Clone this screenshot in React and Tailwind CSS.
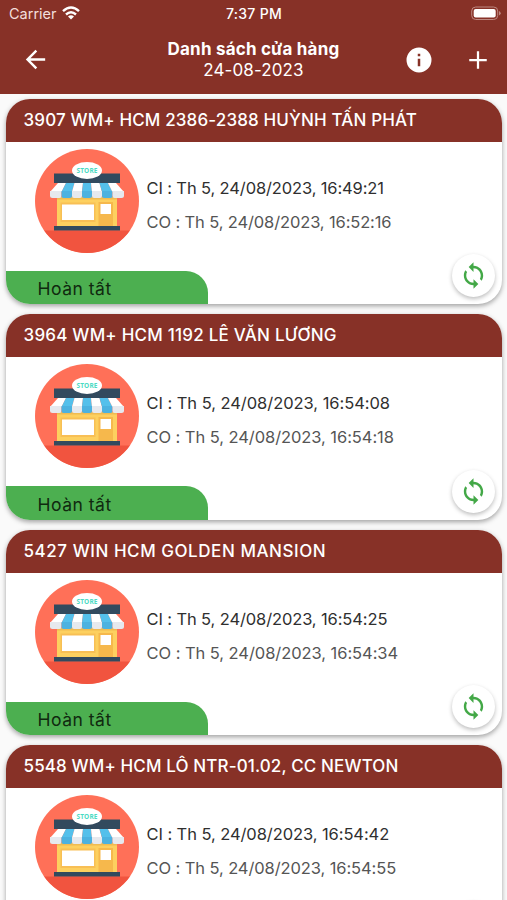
import React from "react";

const stores = [
  { name: "3907 WM+ HCM 2386-2388 HUỲNH TẤN PHÁT", ci: "16:49:21", co: "16:52:16", status: "Hoàn tất", nameFit: "tracking-[0.14px]", ciFit: "tracking-[-0.13px]", coFit: "tracking-[-0.13px]" },
  { name: "3964 WM+ HCM 1192 LÊ VĂN LƯƠNG", ci: "16:54:08", co: "16:54:18", status: "Hoàn tất", nameFit: "tracking-[0.22px]", ciFit: "tracking-[-0.05px]", coFit: "tracking-[-0.07px]" },
  { name: "5427 WIN HCM GOLDEN MANSION", ci: "16:54:25", co: "16:54:34", status: "Hoàn tất", nameFit: "tracking-[0.55px]", ciFit: "tracking-[-0.12px]", coFit: "tracking-[-0.06px]" },
  { name: "5548 WM+ HCM LÔ NTR-01.02, CC NEWTON", ci: "16:54:42", co: "16:54:55", status: null, nameFit: "tracking-[0.13px]", ciFit: "tracking-[-0.08px]", coFit: "tracking-[-0.1px]" },
];

function StoreArt() {
  return (
    <svg viewBox="0 0 104 104" className="h-[104px] w-[104px] shrink-0">
      <defs>
        <clipPath id="disc"><circle cx="52" cy="52" r="52" /></clipPath>
      </defs>
      <circle cx="52" cy="52" r="52" fill="#ff7058" />
      <rect y="81.500" width="104" height="23" fill="#f1543f" clipPath="url(#disc)" />
      <rect x="22" y="48" width="60" height="30" fill="#fdd05f" />
      <rect x="22" y="48" width="60" height="2.500" fill="#f0bb52" />
      <rect x="25.500" y="53.500" width="35" height="19.500" fill="#f8bf55" />
      <rect x="27" y="55.500" width="32" height="15.500" fill="#fff" />
      <rect x="63.500" y="53" width="14.500" height="25" fill="#f6b84c" />
      <rect x="65.500" y="55" width="10.500" height="10" fill="#fff" />
      <rect x="19" y="77" width="66" height="4.500" fill="#324a5e" />
      <rect x="19" y="24.500" width="66" height="9.500" fill="#324a5e" />
      <path d="M23 34h8l-4.500 9H15z" fill="#fff" />
      <path d="M31 34h8.500l-2.500 9H26.500z" fill="#54c0eb" />
      <path d="M39.500 34H48l-1 9H37z" fill="#fff" />
      <path d="M48 34h8l1 9H47z" fill="#54c0eb" />
      <path d="M56 34h8.500l2.500 9H57z" fill="#fff" />
      <path d="M64.500 34H73l4.500 9H67z" fill="#54c0eb" />
      <path d="M73 34h8l8 9H77.500z" fill="#fff" />
      <path d="M15 42h11.500v5q0 2-2 2h-7q-2.500 0-2.500-2.500z" fill="#e6e9ee" />
      <path d="M26.500 42H37v5q0 2-2 2h-6.500q-2 0-2-2z" fill="#4cb2e0" />
      <path d="M37 42h10v5q0 2-2 2h-6q-2 0-2-2z" fill="#e6e9ee" />
      <path d="M47 42h10v5q0 2-2 2h-6q-2 0-2-2z" fill="#4cb2e0" />
      <path d="M57 42h10v5q0 2-2 2h-6q-2 0-2-2z" fill="#e6e9ee" />
      <path d="M67 42h10.500v5q0 2-2 2H69q-2 0-2-2z" fill="#4cb2e0" />
      <path d="M77.500 42H89v4.500q0 2.500-2.500 2.500h-7q-2 0-2-2z" fill="#e6e9ee" />
      <ellipse cx="52" cy="21.500" rx="15" ry="8.500" fill="#fff" />
      <text x="52" y="24" textAnchor="middle" textLength="21" className="fill-[#4cdbc4] font-['Open_Sans',sans-serif] text-[6.5px] font-bold">STORE</text>
    </svg>
  );
}

function StoreCard({ store }) {
  return (
    <article className="relative flex h-[205.5px] shrink-0 flex-col rounded-[24px] bg-white shadow-[0_2px_5px_rgba(0,0,0,0.36)]">
      <h2 className={`flex h-[43px] shrink-0 items-center whitespace-nowrap rounded-t-[24px] bg-[#873127] pl-[17.5px] pt-px text-[17px] font-medium text-white ${store.nameFit}`}>
        {store.name}
      </h2>
      <div className="flex h-[129px] shrink-0 pl-[29px] pt-[7px]">
        <StoreArt />
        <div className="ml-[7.5px] flex flex-col whitespace-nowrap pt-[22px] text-[16.5px] leading-[34px]">
          <p className={`text-[#2f2f2f] ${store.ciFit}`}>CI : Th 5, 24/08/2023, {store.ci}</p>
          <p className={`text-[#555555] ${store.coFit}`}>CO : Th 5, 24/08/2023, {store.co}</p>
        </div>
      </div>
      {store.status && (
        <div className="flex h-[33.5px] w-[202px] items-center rounded-bl-[24px] rounded-tr-[22px] bg-[#4caf50] pl-[31.5px] pt-[4px] text-[17.5px] tracking-[0.5px] text-[#10290f]">
          {store.status}
        </div>
      )}
      <button className="absolute bottom-[7px] right-[7px] flex h-[43px] w-[43px] items-center justify-center rounded-full bg-white shadow-[0_2px_4px_rgba(0,0,0,0.26)]">
        <svg viewBox="0 0 24 24" className="h-[29px] w-[29px] fill-[#43a847]">
          <path d="M12 4V1L8 5l4 4V6c3.310 0 6 2.690 6 6 0 1.010-.25 1.970-.7 2.800l1.460 1.460C19.540 15.030 20 13.570 20 12c0-4.420-3.580-8-8-8zm0 14c-3.310 0-6-2.690-6-6 0-1.010.25-1.970.7-2.800L5.240 7.740C4.460 8.970 4 10.430 4 12c0 4.420 3.580 8 8 8v3l4-4-4-4v3z" />
        </svg>
      </button>
    </article>
  );
}

export default function App() {
  return (
    <div className="flex h-[900px] w-[507px] flex-col overflow-hidden bg-[#fafafa] font-['Inter','Noto_Sans',sans-serif]">
      <header className="flex h-[93.5px] shrink-0 flex-col bg-[#873127] text-white">
        <div className="grid h-[27px] grid-cols-[1fr_auto_1fr] items-center pl-[9px] pr-[6px] text-[14.5px]">
          <div className="flex items-center gap-[5px] text-[#f3dedb]">
            <span>Carrier</span>
            <svg viewBox="0 0 18 14" className="h-[14px] w-[18px] -translate-y-px fill-none stroke-white stroke-[2.4]">
              <path d="M1 5.200Q9-2.200 17 5.200M4 8.500Q9 4 14 8.500" />
              <path d="M9 13.500 6 10.600Q9 8 12 10.600Z" className="fill-white stroke-none" />
            </svg>
          </div>
          <span className="-translate-x-px text-[14px] font-medium tracking-[0.3px]">7:37 PM</span>
          <svg viewBox="0 0 30 15" className="h-[15px] w-[30px] justify-self-end">
            <rect x="0.700" y="1" width="26" height="12.500" rx="4" fill="none" stroke="#bd8881" />
            <rect x="2.700" y="3" width="22" height="8.500" rx="2" fill="#fff" />
            <path d="M28 5v4.500q1.700-.7 1.700-2.250T28 5" fill="#bd8881" />
          </svg>
        </div>
        <div className="grid h-[66px] grid-cols-[1fr_auto_1fr] items-center pb-px">
          <svg viewBox="0 0 24 24" className="ml-[21px] h-[29px] w-[29px] fill-white">
            <path d="M20 11H7.830l5.590-5.590L12 4l-8 8 8 8 1.410-1.410L7.830 13H20v-2z" />
          </svg>
          <div className="flex flex-col items-center whitespace-nowrap pt-px text-[17px] leading-[21px]">
            <h1 className="font-bold tracking-[0.2px]">Danh sách cửa hàng</h1>
            <p className="tracking-[0.1px]">24-08-2023</p>
          </div>
          <div className="mr-[14.5px] flex items-center justify-end gap-[29px]">
            <svg viewBox="0 0 24 24" className="h-[30px] w-[30px] fill-white">
              <path d="M12 2a10 10 0 1 0 0 20 10 10 0 0 0 0-20zm1 15h-2v-6h2v6zm0-8h-2V7h2v2z" />
            </svg>
            <svg viewBox="0 0 24 24" className="h-[30px] w-[30px] fill-white">
              <path d="M19 12.900h-6.100V19h-1.800v-6.100H5v-1.800h6.100V5h1.800v6.100H19z" />
            </svg>
          </div>
        </div>
      </header>
      <main className="flex flex-col gap-[10px] pl-[6px] pr-[5px] pt-[5px]">
        {stores.map((store) => (
          <StoreCard key={store.name} store={store} />
        ))}
      </main>
    </div>
  );
}
